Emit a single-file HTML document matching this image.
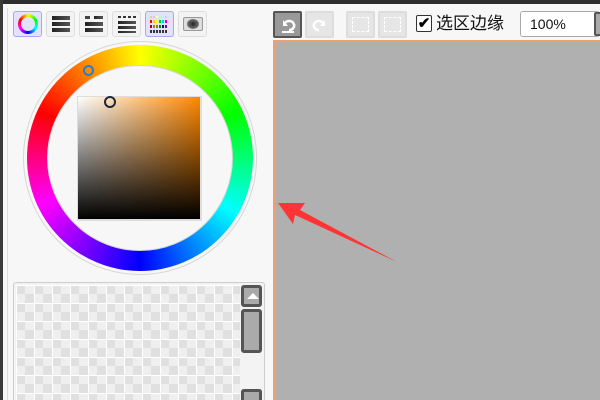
<!DOCTYPE html>
<html style="width:600px;height:400px;overflow:hidden"><head><meta charset="utf-8"><style>
*{margin:0;padding:0;box-sizing:border-box}
body{width:600px;height:400px;overflow:hidden;background:#f7f7f7;position:relative;font-family:"Liberation Sans","Noto Sans CJK SC",sans-serif}
.a{position:absolute}
.btn{position:absolute;top:11px;width:29px;height:26px;border:1px solid #ddd;border-radius:3px;background:#f3f3f3}
.sel{background:#e2e2fb;border:1px solid #a8a8f0}
.bar{position:absolute;left:6px;width:16px;background:linear-gradient(90deg,#222,#555)}
</style></head><body>
<div class="a" style="left:0;top:0;width:600px;height:4px;background:#2e2e2e"></div>
<div class="a" style="left:0;top:0;width:3px;height:400px;background:#3a3a3a"></div>
<div class="a" style="left:7px;top:8px;width:1px;height:392px;background:#ddd"></div>

<div class="btn sel" style="left:13px"><div class="a" style="left:4px;top:2px;width:20px;height:20px;border-radius:50%;background:conic-gradient(#ff0,#0f0,#0ff,#00f,#f0f,#f00,#ff0)"></div><div class="a" style="left:7px;top:5px;width:14px;height:14px;border-radius:50%;background:#e2e2fb"></div></div>
<div class="btn" style="left:46px"><div class="bar" style="top:4px;height:4px;left:5px;width:18px"></div><div class="bar" style="top:10px;height:4px;left:5px;width:18px"></div><div class="bar" style="top:16px;height:4px;left:5px;width:18px"></div></div>
<div class="btn" style="left:79px"><div class="bar" style="top:4px;height:3px;left:5px;width:5px;background:#444"></div><div class="bar" style="top:4px;height:3px;left:14px;width:9px"></div><div class="bar" style="top:10px;height:4px;left:5px;width:18px"></div><div class="bar" style="top:16px;height:4px;left:5px;width:18px"></div></div>
<div class="btn" style="left:112px"><div class="bar" style="top:4px;height:2px;left:5px;width:18px;background:repeating-linear-gradient(90deg,#333 0 3px,transparent 3px 5px)"></div><div class="bar" style="top:9px;height:3px;left:5px;width:18px"></div><div class="bar" style="top:14px;height:3px;left:5px;width:18px"></div><div class="bar" style="top:19px;height:2px;left:5px;width:18px"></div></div>
<div class="btn sel" style="left:145px">
<svg class="a" style="left:4px;top:4px" width="20" height="18" viewBox="0 0 20 18">
<g fill="#fbb"><rect x="0" y="0" width="2" height="2"/><rect x="3" y="0" width="2" height="2"/><rect x="6" y="0" width="2" height="2" fill="#ffb"/><rect x="9" y="0" width="2" height="2" fill="#bfb"/><rect x="12" y="0" width="2" height="2" fill="#bef"/><rect x="15" y="0" width="2" height="2" fill="#ccf"/></g>
<g><rect x="0" y="4" width="2" height="3" fill="#f00"/><rect x="3" y="4" width="2" height="3" fill="#fc0"/><rect x="6" y="4" width="2" height="3" fill="#ff0"/><rect x="9" y="4" width="2" height="3" fill="#0c0"/><rect x="12" y="4" width="2" height="3" fill="#0cf"/><rect x="15" y="4" width="2" height="3" fill="#c0f"/></g>
<g><rect x="0" y="9" width="2" height="3" fill="#a00"/><rect x="3" y="9" width="2" height="3" fill="#a80"/><rect x="6" y="9" width="2" height="3" fill="#880"/><rect x="9" y="9" width="2" height="3" fill="#080"/><rect x="12" y="9" width="2" height="3" fill="#00a"/><rect x="15" y="9" width="2" height="3" fill="#808"/></g>
<g fill="#333"><rect x="0" y="14" width="2" height="3"/><rect x="3" y="14" width="2" height="3"/><rect x="6" y="14" width="2" height="3"/><rect x="9" y="14" width="2" height="3"/><rect x="12" y="14" width="2" height="3"/><rect x="15" y="14" width="2" height="3"/></g>
</svg></div>
<div class="btn" style="left:178px"><div class="a" style="left:4px;top:5px;width:20px;height:14px;border:1px solid #999;border-radius:2px;background:#ddd"></div><div class="a" style="left:8px;top:7px;width:12px;height:10px;border-radius:50%;background:radial-gradient(#222,#777 70%,transparent)"></div></div>

<div class="a" style="left:23px;top:41px;width:234px;height:234px;border-radius:50%;border:1px solid #d6d6d6"></div>
<div class="a" style="left:27px;top:45px;width:226px;height:226px;border-radius:50%;background:conic-gradient(#ff0 0deg,#0f0 65deg,#0ff 120deg,#00f 180deg,#f0f 245deg,#f00 295deg,#ff0 360deg)"></div>
<div class="a" style="left:47px;top:65px;width:186px;height:186px;border-radius:50%;background:#f7f7f7;border:1px solid #d6d6d6"></div>
<div class="a" style="left:77px;top:96px;width:125px;height:125px;background:#ddd"></div>
<div class="a" style="left:78px;top:97px;width:122px;height:122px;background:linear-gradient(to top,#000,transparent),linear-gradient(to right,#fff,#f80)"></div>
<div class="a" style="left:83px;top:65px;width:11px;height:11px;border-radius:50%;border:2px solid #1e7fe0"></div>
<div class="a" style="left:104px;top:96px;width:12px;height:12px;border-radius:50%;border:2.5px solid #1a2a3a"></div>

<div class="a" style="left:13px;top:282px;width:252px;height:118px;border:1px solid #ccc;border-bottom:0;border-radius:3px 3px 0 0;background:#f3f3f3"></div>
<div class="a" style="left:16px;top:285px;width:224px;height:115px;background:
linear-gradient(90deg,#fff 1px,transparent 1px) 0 0/18px 18px,
linear-gradient(#fff 1px,transparent 1px) 0 0/18px 18px,
conic-gradient(#efefef 25%,#e0e0e0 0 50%,#efefef 0 75%,#e0e0e0 0) 0 0/18px 18px"></div>
<div class="a" style="left:241px;top:285px;width:21px;height:22px;border:3px solid #555;border-radius:3px;background:#aaa"><div class="a" style="left:3px;top:5px;border:6px solid transparent;border-bottom:6px solid #fff;border-top:0"></div></div>
<div class="a" style="left:241px;top:309px;width:21px;height:44px;border:3px solid #555;border-radius:3px;background:#aaa"></div>
<div class="a" style="left:241px;top:389px;width:21px;height:11px;border:3px solid #555;border-bottom:0;border-radius:3px 3px 0 0;background:#aaa"></div>

<div class="a" style="left:273px;top:11px;width:29px;height:27px;border:2px solid #555;border-radius:2px;background:#999"><svg class="a" style="left:4px;top:3px" width="18" height="18" viewBox="0 0 18 18"><path d="M4 4 L4 10 L9 10 Z" fill="#fff"/><path d="M6 7 A5 4.5 0 1 1 10 14" stroke="#fff" stroke-width="2.5" fill="none"/><rect x="3" y="15" width="12" height="2" fill="#fff"/></svg></div>
<div class="a" style="left:305px;top:11px;width:29px;height:27px;border:2px solid #ddd;border-radius:2px;background:#e6e6e6"><svg class="a" style="left:4px;top:3px" width="18" height="18" viewBox="0 0 18 18"><path d="M14 4 L14 10 L9 10 Z" fill="#fff"/><path d="M12 7 A5 4.5 0 1 0 8 14" stroke="#fff" stroke-width="2.5" fill="none"/></svg></div>
<div class="a" style="left:346px;top:11px;width:29px;height:27px;border:2px solid #ddd;border-radius:2px;background:#e6e6e6"><div class="a" style="left:4px;top:4px;width:17px;height:15px;border:1px dashed #fff"></div></div>
<div class="a" style="left:378px;top:11px;width:29px;height:27px;border:2px solid #ddd;border-radius:2px;background:#e6e6e6"><div class="a" style="left:4px;top:4px;width:17px;height:15px;border:1px dashed #fff"></div></div>
<div class="a" style="left:416px;top:15px;width:16px;height:17px;border:1px solid #333;border-radius:2px;background:#fff;font-size:15px;line-height:15px;text-align:center;font-weight:bold">✔</div>
<div class="a" style="left:436px;top:12px;font-size:17px;line-height:24px;color:#111">选区边缘</div>
<div class="a" style="left:520px;top:11px;width:80px;height:26px;border:1px solid #aaa;border-radius:3px;background:#fff;font-size:14px;line-height:24px;padding-left:9px;color:#111">100%</div>
<div class="a" style="left:594px;top:12px;width:8px;height:24px;border:2px solid #555;border-radius:2px;background:#aaa"></div>

<div class="a" style="left:273px;top:40px;width:327px;height:360px;background:#b0b0b0;border-top:2px solid #f0a070;border-left:2px solid #f0a070"></div>
<svg class="a" style="left:0;top:0" width="600" height="400"><path d="M278 203 L305 203 L300 210 L397 262 L295 215 L293 224 Z" fill="#ff3434"/></svg>
</body></html>
